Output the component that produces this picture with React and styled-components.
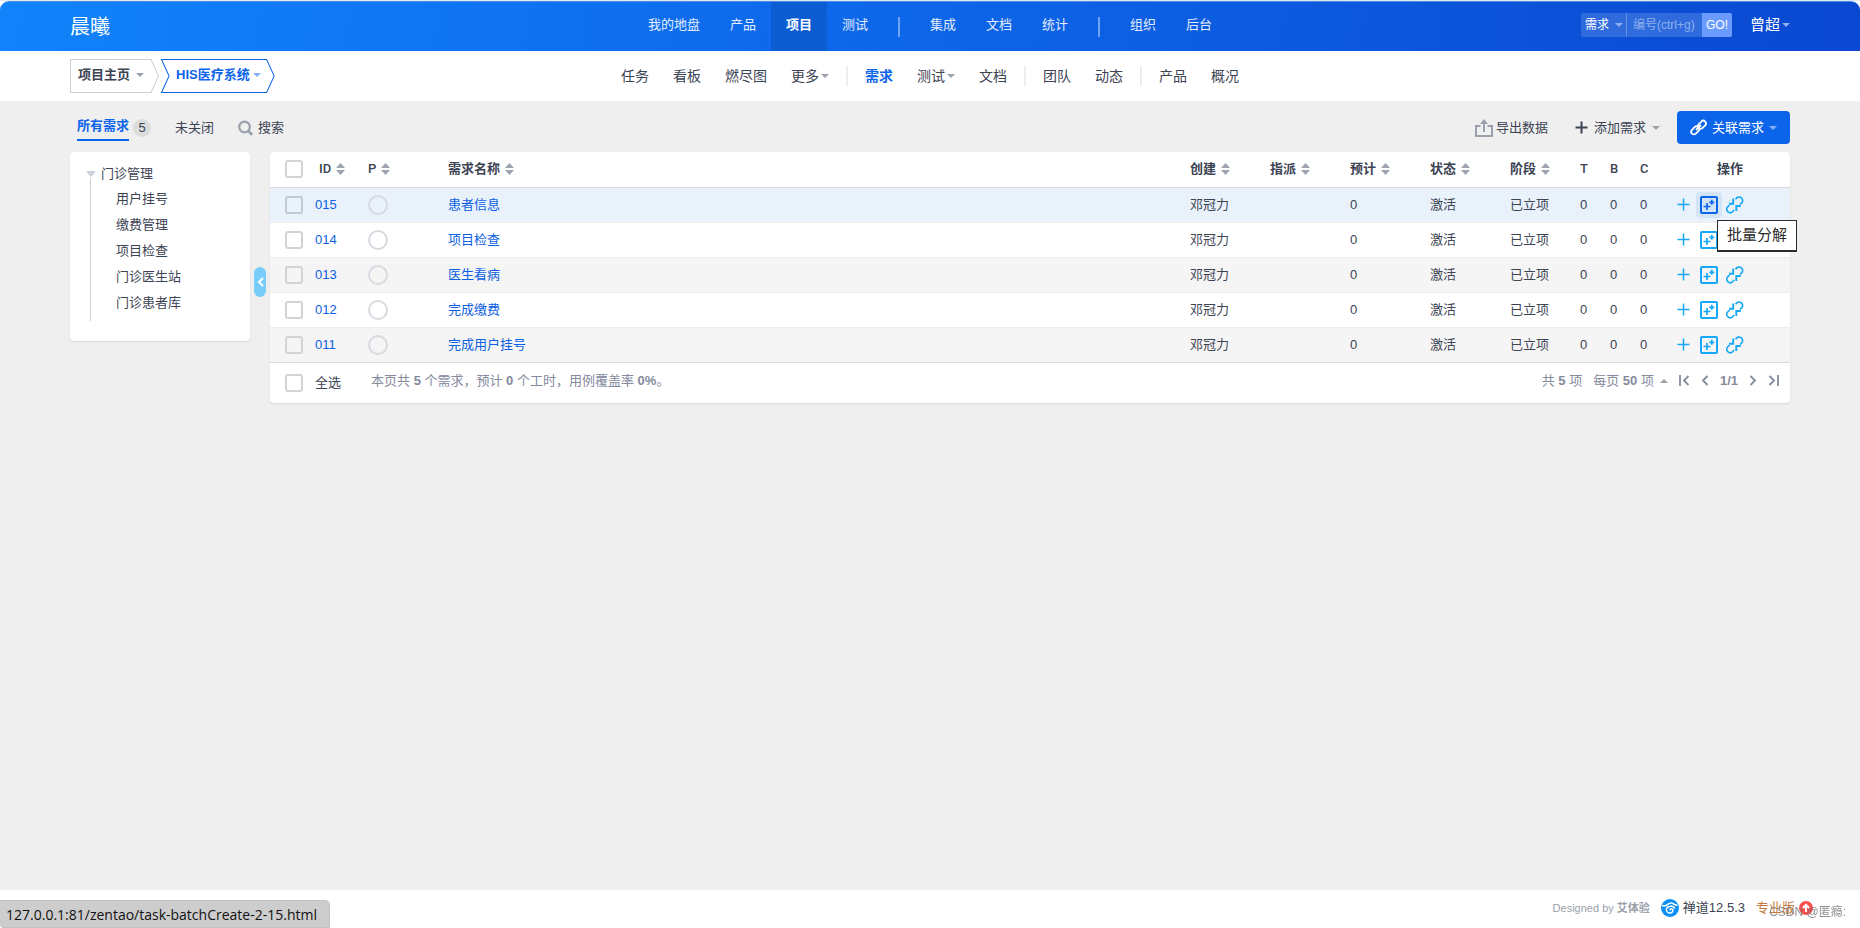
import React from "react";
import styled, { createGlobalStyle } from "styled-components";

const GlobalStyle = createGlobalStyle`
  * {
    box-sizing: border-box;
  }

  body {
    margin: 0;
    background: #fff;
    color: #3c4353;
    font-family: "Liberation Sans", "Noto Sans CJK SC", sans-serif;
    font-size: 13px;
    line-height: 20px;
  }

  a {
    color: inherit;
    text-decoration: none;
  }

  button,
  input,
  select {
    margin: 0;
    padding: 0;
    border: 0;
    background: none;
    color: inherit;
    font: inherit;
  }
`;

const Page = styled.div`
  display: flex;
  flex-direction: column;
  min-height: 100vh;
  border-top: 1px solid #e4e7ee;
`;

const Header = styled.header`
  display: grid;
  grid-template-columns: 1fr auto 1fr;
  align-items: center;
  height: 50px;
  padding: 0 70px;
  border-top: 1px solid #4a8fe8;
  border-radius: 9px 9px 0 0;
  background: linear-gradient(100deg, #1183fb 0%, #0e68ea 45%, #0a48d1 100%);
  color: #fff;
`;

const Brand = styled.h1`
  margin: 0;
  font-size: 20px;
  font-weight: 400;
  line-height: 30px;
`;

const MainNav = styled.nav`
  display: flex;
  align-items: center;
  height: 49px;
`;

const MainLink = styled.a`
  height: 49px;
  padding: 0 15px;
  line-height: 46px;
  color: ${props => (props.$active ? "#fff" : "#e3edfd")};
  font-weight: ${props => (props.$active ? 700 : 400)};
  background: ${props => (props.$active ? "#0d5dd2" : "transparent")};
`;

const MainDivider = styled.span`
  width: 2px;
  height: 20px;
  margin: 0 15px;
  background: #6ea4f3;
`;

const HeaderRight = styled.div`
  display: flex;
  align-items: center;
  align-self: start;
  justify-content: flex-end;
  gap: 18px;
  height: 46px;
`;

const SearchBox = styled.form`
  display: flex;
  height: 24px;
  border-radius: 2px;
  overflow: hidden;
  background: #2f6bdd;
  font-size: 12px;
`;

const SearchType = styled.label`
  display: flex;
  align-items: center;
  width: 46px;
  padding: 0 4px;
  gap: 5px;
  border-right: 1px solid #6590e6;

  select {
    appearance: none;
    width: 25px;
    height: 24px;
  }
`;

const SearchInput = styled.input`
  width: 75px;
  padding: 0 6px;

  &::placeholder {
    color: #8fb0ef;
    opacity: 1;
  }
`;

const GoButton = styled.button`
  width: 30px;
  background: #6c9bff;
  color: #fff;
`;

const UserButton = styled.button`
  display: flex;
  align-items: center;
  gap: 2px;
  font-size: 15px;
`;

const Caret = styled.i`
  display: inline-block;
  flex: none;
  border: 4px solid transparent;
  border-top-color: ${props => props.$color || "#9ba1ad"};
  border-bottom-width: 0;
  transform: ${props => (props.$up ? "rotate(180deg)" : "none")};
`;

const SubHeader = styled.div`
  display: grid;
  grid-template-columns: 1fr auto 1fr;
  align-items: center;
  height: 50px;
  padding: 0 70px;
`;

const Crumbs = styled.div`
  display: flex;
  gap: 2px;
`;

const Crumb = styled.button`
  position: relative;
  display: flex;
  align-items: center;
  gap: ${props => (props.$active ? 3 : 6)}px;
  height: 34px;
  padding: 0 ${props => (props.$active ? "14px 2px 15px" : "15px 2px 8px")};
  color: ${props => (props.$active ? "#0c64eb" : "#3c4353")};
  font-weight: 700;

  svg {
    position: absolute;
    inset: 0;
    width: 100%;
    height: 100%;
    overflow: visible;
  }
`;

const SubNav = styled.nav`
  display: flex;
  align-items: center;
  font-size: 14px;
`;

const SubLink = styled.a`
  display: flex;
  align-items: center;
  gap: 2px;
  padding: 0 12px;
  color: ${props => (props.$active ? "#0c64eb" : "#3c4353")};
  font-weight: ${props => (props.$active ? 700 : 400)};
`;

const SubDivider = styled.span`
  width: 2px;
  height: 20px;
  margin: 0 5px;
  background: #eee;
`;

const Main = styled.main`
  flex: 1;
  padding: 10px 70px;
  background: #efefef;
`;

const Toolbar = styled.div`
  display: flex;
  align-items: center;
  justify-content: space-between;
  height: 33px;
  margin-bottom: 8px;
  padding-left: 7px;
`;

const ToolGroup = styled.div`
  display: flex;
  align-items: center;
  gap: ${props => props.$gap}px;
`;

const Tab = styled.a`
  display: flex;
  align-items: center;
  gap: 4px;
`;

const TabText = styled.span`
  height: 26px;
  line-height: 22px;
  border-bottom: 2px solid #0c64eb;
  color: #0c64eb;
  font-weight: 700;
`;

const Badge = styled.span`
  width: 18px;
  height: 18px;
  border-radius: 9px;
  background: #ddd;
  line-height: 18px;
  text-align: center;
`;

const ToolButton = styled.button`
  display: flex;
  align-items: center;
  gap: ${props => props.$gap}px;
`;

const PrimaryButton = styled(ToolButton)`
  height: 33px;
  padding: 0 13px;
  border-radius: 4px;
  background: #0c64eb;
  color: #fff;
`;

const Content = styled.div`
  display: flex;
  align-items: flex-start;
`;

const Sidebar = styled.aside`
  width: 180px;
  padding: 12px 16px 20px;
  border-radius: 4px;
  background: #fff;
  box-shadow: 0 1px 2px rgba(0, 0, 0, 0.1);
`;

const TreeRoot = styled.a`
  display: flex;
  align-items: center;
  gap: 5px;

  i {
    border-width: 6px 5px 0;
    border-top-color: #cbd0db;
  }
`;

const TreeList = styled.ul`
  margin: -6px 0 0 4px;
  padding: 8px 0 5px 25px;
  border-left: 1px solid #cbd0db;
  list-style: none;
  line-height: 26px;
`;

const Gutter = styled.div`
  display: flex;
  flex: none;
  justify-content: center;
  width: 20px;
  padding-top: 115px;
`;

const CollapseButton = styled.button`
  display: flex;
  align-items: center;
  justify-content: center;
  width: 12px;
  height: 30px;
  border-radius: 6px;
  background: #79cdfb;
`;

const TablePanel = styled.section`
  flex: 1;
  border-radius: 4px;
  background: #fff;
  box-shadow: 0 1px 2px rgba(0, 0, 0, 0.1);
`;

const Table = styled.table`
  width: 100%;
  border-collapse: collapse;
  table-layout: fixed;

  th,
  td {
    height: 35px;
    padding: 0 8px;
    text-align: left;
  }

  th {
    border-bottom: 1px solid #d8dbe0;
    font-weight: 700;
  }

  th:last-child,
  td:last-child {
    padding: 0;
    text-align: center;
  }
`;

const Row = styled.tr`
  background: ${props => props.$bg};

  td {
    border-bottom: 1px solid #ededed;
  }

  &:last-child td {
    border-bottom-color: #d8dbe0;
  }
`;

const CheckCell = styled.div`
  display: flex;
  align-items: center;
  gap: ${props => props.$gap}px;
  padding-left: 7px;
`;

const Checkbox = styled.input.attrs({ type: "checkbox" })`
  appearance: none;
  flex: none;
  width: 18px;
  height: 18px;
  border: 2px solid ${props => (props.$hover ? "#c2cad6" : "#d3d3d3")};
  border-radius: 3px;
`;

const SortLabel = styled.span`
  display: flex;
  align-items: center;
  gap: 5px;
`;

const Letter = styled.span`
  font-family: Roboto, sans-serif;
  font-weight: 500;
`;

const Priority = styled.span`
  display: block;
  width: 20px;
  height: 20px;
  border: 2px solid #d6d9df;
  border-radius: 50%;
`;

const BlueLink = styled.a`
  color: #0c60e1;
`;

const Actions = styled.div`
  position: relative;
  display: flex;
`;

const ActionButton = styled.button`
  display: flex;
  align-items: center;
  justify-content: center;
  width: 26px;
  height: 26px;
  border-radius: 4px;
  color: ${props => (props.$hover ? "#0c64eb" : "#16a8f8")};
  background: ${props => (props.$hover ? "#d3e4f7" : "transparent")};
`;

const Tooltip = styled.span`
  position: absolute;
  z-index: 2;
  top: 28px;
  left: 47px;
  width: 80px;
  height: 32px;
  border: 1px solid #2b2b2b;
  border-bottom-width: 2px;
  background: #fff;
  color: #2b2b2b;
  font-size: 15px;
  line-height: 28px;
  text-align: center;
`;

const TableFooter = styled.div`
  display: flex;
  align-items: center;
  height: 40px;
  padding: 0 11px 0 8px;
  color: #838a9d;

  label {
    color: #3c4353;
  }
`;

const Summary = styled.span`
  flex: 1;
  padding: 0 0 4px 30px;
`;

const Pager = styled.div`
  display: flex;
  align-items: center;
  gap: 11px;
  padding-bottom: 4px;
`;

const PagerButton = styled.button`
  display: flex;
  align-items: center;
  gap: 6px;
`;

const Footer = styled.footer`
  display: flex;
  align-items: center;
  justify-content: flex-end;
  gap: 11px;
  height: 38px;
  padding: 0 47px 2px;
  background: #fff;
`;

const Designed = styled.span`
  color: #9a9faa;
  font-size: 11px;
`;

const FooterLink = styled.a`
  display: flex;
  align-items: center;
  gap: 4px;
  color: ${props => props.$color || "#3c4353"};
`;

const StatusBubble = styled.div`
  position: fixed;
  bottom: 0;
  left: 0;
  height: 28px;
  padding: 0 12px 0 6px;
  border: 1px solid #c2c2c2;
  border-left: 0;
  border-radius: 0 5px 0 4px;
  background: #cdcdcd;
  color: #111;
  font-family: "Open Sans", sans-serif;
  font-size: 14px;
  line-height: 27px;
`;

const Watermark = styled.span`
  position: fixed;
  right: 14px;
  bottom: 6px;
  color: rgba(110, 110, 110, 0.75);
  font-size: 12px;
`;

const SortIcon = () => (
  <svg width="9" height="12" viewBox="0 0 9 12" fill="#9ea3b0">
    <path d="M4.500 0 9 5H0zM0 7h9l-4.500 5z" />
  </svg>
);

const SearchIcon = () => (
  <svg width="15" height="16" viewBox="0 0 15 16" fill="none" stroke="#9aa1ac" strokeWidth="2.200">
    <circle cx="6.500" cy="7" r="5.300" />
    <path d="M10.500 11 14 14.700" strokeWidth="2.800" />
  </svg>
);

const ExportIcon = () => (
  <svg width="18" height="18" viewBox="0 0 18 18" fill="none" stroke="#9aa1ac" strokeWidth="2">
    <path d="M5.500 7H1v10h16V7h-4.500M9 13V2.500" />
    <path d="M5 5 9 0l4 5z" fill="#9aa1ac" stroke="none" />
  </svg>
);

const PlusIcon = ({ size = 13, width = 2 }) => (
  <svg width={size} height={size} viewBox="0 0 13 13" fill="none" stroke="currentColor" strokeWidth={width}>
    <path d="M6.500 0.500v12M0.500 6.500h12" />
  </svg>
);

const LinkIcon = () => (
  <svg width="17" height="17" viewBox="0 0 17 17" fill="none" stroke="#fff" strokeWidth="1.800">
    <rect x="7.500" y="3" width="9" height="5.400" rx="2.700" transform="rotate(-45 12 5.700)" />
    <rect x="0.700" y="8.700" width="9" height="5.400" rx="2.700" transform="rotate(-45 5.200 11.400)" />
    <path d="m6 11 5-5" />
  </svg>
);

const BatchIcon = () => (
  <svg width="18" height="18" viewBox="0 0 18 18" fill="none" stroke="currentColor" strokeWidth="2">
    <rect x="1" y="1" width="16" height="16" rx="1" />
    <path d="M7 7v7M3.500 10.500h7M11.800 3.800v5M9.300 6.300h5" strokeWidth="1.700" />
  </svg>
);

const UnlinkIcon = () => (
  <svg width="18" height="18" viewBox="0 0 18 18" fill="none" stroke="currentColor" strokeWidth="1.600">
    <path d="M9.500 3.200C11 1 13.500.300 15.300 1.800c1.900 1.600 1.700 3.900.2 5.400L14 8.500" />
    <path d="M3.500 9 1.800 10.800C.3 12.500.6 14.600 1.800 15.700c1.500 1.300 3.700 1.200 5-.2L8 14" />
    <path d="M7.200 2.500v5.300H3M10.300 15v-5h4.500" strokeWidth="1.900" />
  </svg>
);

const ChevronIcon = ({ flip, bar }) => (
  <svg
    width={bar ? 11 : 8}
    height="11"
    viewBox={bar ? "0 0 11 11" : "3 0 8 11"}
    fill="none"
    stroke="currentColor"
    strokeWidth="1.800"
    transform={flip ? "scale(-1 1)" : undefined}
  >
    <path d="M9.500 1 5 5.500 9.500 10" />
    {bar && <path d="M1 0v11" />}
  </svg>
);

const ZenIcon = () => (
  <svg width="18" height="18" viewBox="0 0 18 18" fill="none" stroke="#fff" strokeLinecap="round">
    <circle cx="9" cy="9" r="9" fill="#0c8ff5" stroke="none" />
    <path d="M1.500 6.500C5 8.500 7 3.500 10.500 4c2.500.4 2.800 2.800 5.500 2" strokeWidth="1.500" />
    <path d="M9 10.800c.3-1.500 2.800-1.400 2.900.4.100 2-2.100 3.300-4.200 2.700-2.800-.8-3.300-4.300-.7-5.900 2.600-1.500 5.500-.7 6.500 1" strokeWidth="1.500" />
  </svg>
);

const UpgradeIcon = () => (
  <svg width="14" height="14" viewBox="0 0 14 14" fill="none" stroke="#fff" strokeWidth="2">
    <circle cx="7" cy="7" r="7" fill="#fb4f4d" stroke="none" />
    <path d="M7 11V4M3.800 7 7 3.800 10.200 7" />
  </svg>
);

const mainLinks = ["我的地盘", "产品", "项目", "测试", "|", "集成", "文档", "统计", "|", "组织", "后台"];

const subLinks = ["任务", "看板", "燃尽图", "更多", "|", "需求", "测试", "文档", "|", "团队", "动态", "|", "产品", "概况"];

const modules = ["用户挂号", "缴费管理", "项目检查", "门诊医生站", "门诊患者库"];

const sortColumns = ["创建", "指派", "预计", "状态", "阶段"];

const stories = [
  { id: "015", title: "患者信息", bg: "#e9f2fb" },
  { id: "014", title: "项目检查", bg: "#fff" },
  { id: "013", title: "医生看病", bg: "#f5f5f5" },
  { id: "012", title: "完成缴费", bg: "#fff" },
  { id: "011", title: "完成用户挂号", bg: "#f5f5f5" }
];

const Sortable = ({ children }) => (
  <SortLabel>
    {children}
    <SortIcon />
  </SortLabel>
);

const TopBar = () => (
  <Header>
    <Brand>晨曦</Brand>
    <MainNav>
      {mainLinks.map((name, i) =>
        name === "|" ? (
          <MainDivider key={i} />
        ) : (
          <MainLink key={i} href="#" $active={name === "项目"}>
            {name}
          </MainLink>
        )
      )}
    </MainNav>
    <HeaderRight>
      <SearchBox>
        <SearchType>
          <select aria-label="搜索类型">
            <option>需求</option>
          </select>
          <Caret $color="#8fb0ef" />
        </SearchType>
        <SearchInput placeholder="编号(ctrl+g)" aria-label="编号" />
        <GoButton type="button">GO!</GoButton>
      </SearchBox>
      <UserButton>
        曾超
        <Caret $color="#8fb0ef" />
      </UserButton>
    </HeaderRight>
  </Header>
);

const ProjectBar = () => (
  <SubHeader>
    <Crumbs>
      <Crumb>
        <svg viewBox="0 0 89 34" preserveAspectRatio="none" fill="none" stroke="#cbd0db">
          <path d="M.500.500H81L88.500 17 81 33.500H.500z" />
        </svg>
        项目主页
        <Caret />
      </Crumb>
      <Crumb $active>
        <svg viewBox="0 0 113 34" preserveAspectRatio="none" fill="none" stroke="#0c64eb">
          <path d="M.500.500H105L112.500 17 105 33.500H.500L8 17z" />
        </svg>
        HIS医疗系统
        <Caret $color="#85b1f5" />
      </Crumb>
    </Crumbs>
    <SubNav>
      {subLinks.map((name, i) =>
        name === "|" ? (
          <SubDivider key={i} />
        ) : (
          <SubLink key={i} href="#" $active={name === "需求"}>
            {name}
            {(name === "更多" || name === "测试") && <Caret />}
          </SubLink>
        )
      )}
    </SubNav>
  </SubHeader>
);

const StoryRow = ({ story, hover }) => (
  <Row $bg={story.bg}>
    <td>
      <CheckCell $gap={12}>
        <Checkbox $hover={hover} aria-label={story.id} />
        <BlueLink href="#">{story.id}</BlueLink>
      </CheckCell>
    </td>
    <td>
      <Priority />
    </td>
    <td>
      <BlueLink href="#">{story.title}</BlueLink>
    </td>
    <td>邓冠力</td>
    <td />
    <td>0</td>
    <td>激活</td>
    <td>已立项</td>
    <td>0</td>
    <td>0</td>
    <td>0</td>
    <td>
      <Actions>
        <ActionButton aria-label="分解">
          <PlusIcon size={13} width={1.5} />
        </ActionButton>
        <ActionButton aria-label="批量分解" $hover={hover}>
          <BatchIcon />
        </ActionButton>
        <ActionButton aria-label="移除">
          <UnlinkIcon />
        </ActionButton>
        {hover && <Tooltip role="tooltip">批量分解</Tooltip>}
      </Actions>
    </td>
  </Row>
);

const StoryTable = () => (
  <TablePanel>
    <Table>
      <colgroup>
        <col width="90" />
        <col width="80" />
        <col />
        <col width="80" />
        <col width="80" />
        <col width="80" />
        <col width="80" />
        <col width="70" />
        <col width="30" />
        <col width="30" />
        <col width="38" />
        <col width="120" />
      </colgroup>
      <thead>
        <tr>
          <th>
            <CheckCell $gap={16}>
              <Checkbox aria-label="全选" />
              <Sortable>
                <Letter>ID</Letter>
              </Sortable>
            </CheckCell>
          </th>
          <th>
            <Sortable>
              <Letter>P</Letter>
            </Sortable>
          </th>
          <th>
            <Sortable>需求名称</Sortable>
          </th>
          {sortColumns.map(name => (
            <th key={name}>
              <Sortable>{name}</Sortable>
            </th>
          ))}
          {["T", "B", "C"].map(name => (
            <th key={name}>
              <Letter>{name}</Letter>
            </th>
          ))}
          <th>操作</th>
        </tr>
      </thead>
      <tbody>
        {stories.map((story, i) => (
          <StoryRow key={story.id} story={story} hover={i === 0} />
        ))}
      </tbody>
    </Table>
    <TableFooter>
      <CheckCell $gap={12}>
        <Checkbox id="check-all" />
        <label htmlFor="check-all">全选</label>
      </CheckCell>
      <Summary>
        本页共 <strong>5</strong> 个需求，预计 <strong>0</strong> 个工时，用例覆盖率 <strong>0%</strong>。
      </Summary>
      <Pager>
        <span>
          共 <strong>5</strong> 项
        </span>
        <PagerButton>
          <span>
            每页 <strong>50</strong> 项
          </span>
          <Caret $up />
        </PagerButton>
        <PagerButton aria-label="首页">
          <ChevronIcon bar />
        </PagerButton>
        <PagerButton aria-label="上一页">
          <ChevronIcon />
        </PagerButton>
        <strong>1/1</strong>
        <PagerButton aria-label="下一页">
          <ChevronIcon flip />
        </PagerButton>
        <PagerButton aria-label="末页">
          <ChevronIcon flip bar />
        </PagerButton>
      </Pager>
    </TableFooter>
  </TablePanel>
);

const App = () => {
  return (
    <Page>
      <GlobalStyle />
      <TopBar />
      <ProjectBar />
      <Main>
        <Toolbar>
          <ToolGroup $gap={24}>
            <Tab href="#">
              <TabText>所有需求</TabText>
              <Badge>5</Badge>
            </Tab>
            <Tab href="#">未关闭</Tab>
            <ToolButton $gap={5}>
              <SearchIcon />
              搜索
            </ToolButton>
          </ToolGroup>
          <ToolGroup $gap={17}>
            <ToolGroup $gap={27}>
              <ToolButton $gap={3}>
                <ExportIcon />
                导出数据
              </ToolButton>
              <ToolButton $gap={6}>
                <PlusIcon />
                添加需求
                <Caret />
              </ToolButton>
            </ToolGroup>
            <PrimaryButton $gap={5}>
              <LinkIcon />
              关联需求
              <Caret $color="#85b1f5" />
            </PrimaryButton>
          </ToolGroup>
        </Toolbar>
        <Content>
          <Sidebar>
            <TreeRoot href="#">
              <Caret />
              门诊管理
            </TreeRoot>
            <TreeList>
              {modules.map(name => (
                <li key={name}>
                  <a href="#">{name}</a>
                </li>
              ))}
            </TreeList>
          </Sidebar>
          <Gutter>
            <CollapseButton aria-label="收起">
              <svg width="7" height="10" viewBox="0 0 7 10" fill="none" stroke="#fff" strokeWidth="2">
                <path d="M6 1 2 5l4 4" />
              </svg>
            </CollapseButton>
          </Gutter>
          <StoryTable />
        </Content>
      </Main>
      <Footer>
        <Designed>
          Designed by <strong>艾体验</strong>
        </Designed>
        <FooterLink href="#">
          <ZenIcon />
          禅道12.5.3
        </FooterLink>
        <FooterLink href="#" $color="#c5793c">
          专业版
          <UpgradeIcon />
        </FooterLink>
      </Footer>
      <StatusBubble>127.0.0.1:81/zentao/task-batchCreate-2-15.html</StatusBubble>
      <Watermark>CSDN @匿瘾:</Watermark>
    </Page>
  );
};

export default App;
